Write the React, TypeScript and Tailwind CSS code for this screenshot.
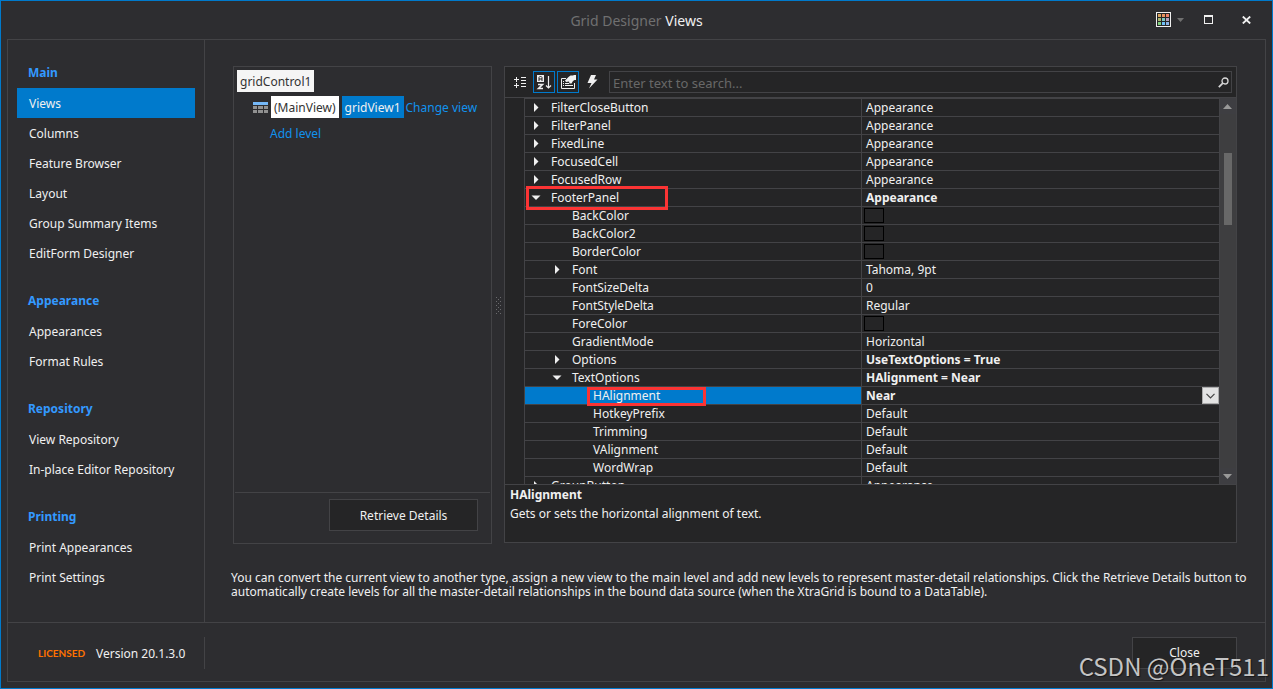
import { useState } from "react";

type Prop = {
    name: string;
    value?: string;
    level?: number;
    open?: boolean;
    bold?: boolean;
    swatch?: boolean;
}

const groups = [
    { title: "Main", items: ["Views", "Columns", "Feature Browser", "Layout", "Group Summary Items", "EditForm Designer"] },
    { title: "Appearance", items: ["Appearances", "Format Rules"] },
    { title: "Repository", items: ["View Repository", "In-place Editor Repository"] },
    { title: "Printing", items: ["Print Appearances", "Print Settings"] },
]

const props: Prop[] = [
    { name: "FilterCloseButton", value: "Appearance", open: false },
    { name: "FilterPanel", value: "Appearance", open: false },
    { name: "FixedLine", value: "Appearance", open: false },
    { name: "FocusedCell", value: "Appearance", open: false },
    { name: "FocusedRow", value: "Appearance", open: false },
    { name: "FooterPanel", value: "Appearance", open: true, bold: true },
    { name: "BackColor", level: 1, swatch: true },
    { name: "BackColor2", level: 1, swatch: true },
    { name: "BorderColor", level: 1, swatch: true },
    { name: "Font", value: "Tahoma, 9pt", level: 1, open: false },
    { name: "FontSizeDelta", value: "0", level: 1 },
    { name: "FontStyleDelta", value: "Regular", level: 1 },
    { name: "ForeColor", level: 1, swatch: true },
    { name: "GradientMode", value: "Horizontal", level: 1 },
    { name: "Options", value: "UseTextOptions = True", level: 1, open: false, bold: true },
    { name: "TextOptions", value: "HAlignment = Near", level: 1, open: true, bold: true },
    { name: "HAlignment", value: "Near", level: 2, bold: true },
    { name: "HotkeyPrefix", value: "Default", level: 2 },
    { name: "Trimming", value: "Default", level: 2 },
    { name: "VAlignment", value: "Default", level: 2 },
    { name: "WordWrap", value: "Default", level: 2 },
    { name: "GroupButton", value: "Appearance", open: false },
]

const indents = ["pl-[5px]", "pl-[26px]", "pl-[47px]"]

const swatches = ["#dba560", "#e8935f", "#ee8168", "#a9b871", "#7ec8c0", "#b3a0c0", "#7ed07e", "#6fc0f8", "#8ab4e8"]

const PaletteIcon = () => (
    <svg width="15" height="15" shapeRendering="crispEdges">
        <path d="M0 0h15v15H0z" fill="#f0f0f0" />
        <path d="M1 1h13v13H1z" fill="#262626" />
        {swatches.map((c, i) => (
            <rect key={i} x={2 + (i % 3) * 4} y={2 + Math.floor(i / 3) * 4} width="3" height="3" fill={c} />
        ))}
    </svg>
)

const CategoryIcon = () => (
    <svg width="13" height="13" fill="#f0f0f0" shapeRendering="crispEdges">
        <path d="M0 3h5v1H0zM2 1h1v5H2zM0 9h5v1H0zM2 7h1v5H2zM7 1h5v1H7zM7 4h5v1H7zM7 7h5v1H7zM7 10h5v1H7z" />
    </svg>
)

const SortIcon = () => (
    <svg width="16" height="16" fill="none">
        <path d="M1 1h7v7H1z" fill="#f0f0f0" />
        <path d="M3 7V3.500L4.500 2 6 3.500V7M3 5h3" stroke="#252525" />
        <path d="M2 10.500h4.500L2.500 14.500H7" stroke="#f0f0f0" strokeWidth="1.600" />
        <path d="M12.500 2v12M10 11.500l2.500 2.500 2.500-2.500" stroke="#f0f0f0" strokeWidth="1.200" />
    </svg>
)

const PagesIcon = () => (
    <svg width="16" height="16" fill="none">
        <path d="M6 4.500H1.500v10h13V9" stroke="#f0f0f0" />
        <path d="M3 7.500h1M3 9.500h1M3 11.500h1M5 9.500h4M5 11.500h8" stroke="#f0f0f0" />
        <path d="M5 6.500L8.500 3l2-1.500H13L14 1h2v5h-1.500L13 7l-1.500 2.500H9.500L9 7.500 6 8z" fill="#f0f0f0" />
    </svg>
)

const BoltIcon = () => (
    <svg width="11" height="14" fill="#f0f0f0">
        <path d="M4 0h5L7 4.500h3.500L2 13.500 4.500 8H0.500z" />
    </svg>
)

const SearchIcon = () => (
    <svg width="11" height="11" fill="none" stroke="#d8d8d8">
        <circle cx="7" cy="4" r="3" strokeWidth="1.300" />
        <path d="M4.800 6.200L0.800 10.200" strokeWidth="1.800" />
    </svg>
)

const TableIcon = () => (
    <svg width="15" height="11" fill="#919191" shapeRendering="crispEdges">
        <rect width="15" height="3" fill="#75b8f8" />
        <path d="M0 4h4v3H0zM5 4h5v3H5zM11 4h4v3h-4zM0 8h4v3H0zM5 8h5v3H5zM11 8h4v3h-4z" />
    </svg>
)

const GripIcon = () => (
    <svg width="5" height="17" fill="#6a6a6d" shapeRendering="crispEdges">
        {[0, 4, 8, 12, 16].map((y) => (
            <path key={y} d={`M0 ${y}h1v1H0zM4 ${y}h1v1H4zM2 ${y + 2}h1v1H2z`} />
        ))}
    </svg>
)

const Expander = ({ open, name }: { open: boolean; name: string }) => (
    <button aria-label={`Toggle ${name}`} className="flex w-3 h-[17px] items-center justify-center">
        {open ? (
            <svg width="10" height="5" fill="#f0f0f0"><path d="M0.500 0.500h9L5 5z" /></svg>
        ) : (
            <svg width="6" height="9" fill="#f0f0f0"><path d="M1 0v9l4.500-4.500z" /></svg>
        )}
    </button>
)

const TitleBar = () => (
    <header className="relative flex h-[38px] shrink-0 items-center justify-center text-[14px]">
        <h1 className="text-[#f0f0f0]"><span className="text-[#707070]">Grid Designer</span> Views</h1>
        <div className="absolute right-[21px] top-0 flex h-[37px] items-center">
            <button aria-label="Skin" className="flex items-center gap-[6px]">
                <PaletteIcon />
                <svg width="7" height="4" fill="#707070"><path d="M0 0h7L3.500 4z" /></svg>
            </button>
            <button aria-label="Maximize" className="ml-5">
                <svg width="9" height="9" shapeRendering="crispEdges"><path d="M0 0h9v9H0zM1 2v6h7V2z" fill="#f0f0f0" fillRule="evenodd" /></svg>
            </button>
            <button aria-label="Close window" className="ml-[29px]">
                <svg width="9" height="8" stroke="#f0f0f0" strokeWidth="1.800"><path d="M0.800 0.500l7.400 7M8.200 0.500l-7.400 7" /></svg>
            </button>
        </div>
    </header>
)

const Sidebar = () => {
    const [active, setActive] = useState("Views")
    return (
        <nav className="w-[197px] shrink-0 border-r border-[#434346] px-[9px]">
            {groups.map((g) => (
                <div key={g.title}>
                    <h2 className="h-12 pt-4 pl-[11px] leading-[34px] font-bold text-[#3399ff]">{g.title}</h2>
                    {g.items.map((item) => (
                        <a
                            key={item}
                            href="#"
                            onClick={() => setActive(item)}
                            className={item === active ? "block h-[30px] pl-3 leading-8 bg-[#007acc]" : "block h-[30px] pl-3 leading-8"}
                        >
                            {item}
                        </a>
                    ))}
                </div>
            ))}
        </nav>
    )
}

const LevelTree = () => (
    <section className="flex w-[259px] shrink-0 flex-col border border-[#434346]">
        <div className="flex flex-1 flex-col items-start gap-1 p-[3px] leading-6">
            <button className="h-[22px] bg-[#f5f5f5] px-[3px] text-[#333333]">gridControl1</button>
            <div className="flex h-[22px] items-center pl-4">
                <TableIcon />
                <button className="ml-[3px] h-[22px] bg-white px-[3px] text-[#333333]">(MainView)</button>
                <button className="ml-[3px] h-[22px] bg-[#007acc] px-[3px]">gridView1</button>
                <a href="#" className="ml-[2px] h-[22px] text-[#1192ee]">Change view</a>
            </div>
            <a href="#" className="h-[22px] pl-[33px] text-[#1192ee]">Add level</a>
        </div>
        <div className="mx-px flex h-[51px] justify-end border-t border-[#434346] pt-[6px] pr-3">
            <button className="h-8 w-[149px] border border-[#434346] bg-[#252526] pt-px">Retrieve Details</button>
        </div>
    </section>
)

const PropRow = ({ p }: { p: Prop }) => {
    const selected = p.name === "HAlignment"
    return (
        <tr className="h-[18px] leading-[17px]">
            <td className={selected ? "relative border-r border-b border-[#434346] bg-[#007acc] p-0" : "relative border-r border-b border-[#434346] p-0"}>
                <div className={`flex h-[17px] gap-[9px] ${indents[p.level ?? 0]}`}>
                    {p.open === undefined ? <span className="w-3" /> : <Expander open={p.open} name={p.name} />}
                    <span>{p.name}</span>
                </div>
                {p.name === "FooterPanel" && <div className="absolute z-10 -top-[3px] left-px h-6 w-[142px] border-3 border-[#fb3434]" />}
                {selected && <div className="absolute z-10 top-0 left-[62px] h-[19px] w-[119px] border-3 border-[#fb3434]" />}
            </td>
            <td className={p.bold ? "relative border-b border-[#434346] p-0 font-bold" : "relative border-b border-[#434346] p-0"}>
                {selected ? (
                    <>
                        <select aria-label={p.name} defaultValue="Near" className="block h-[17px] w-full appearance-none bg-transparent pl-1">
                            <option>Default</option>
                            <option>Near</option>
                            <option>Center</option>
                            <option>Far</option>
                        </select>
                        <span className="pointer-events-none absolute top-0 right-0 flex h-[17px] w-[17px] items-center justify-center border border-[#ababab] bg-[#e3e3e3]">
                            <svg width="9" height="6" fill="none" stroke="#444444" strokeWidth="1.200"><path d="M0.500 0.800l4 4 4-4" /></svg>
                        </span>
                    </>
                ) : p.swatch ? (
                    <div className="ml-[2px] h-[15px] w-5 border border-black" />
                ) : (
                    <div className="h-[17px] pl-1">{p.value}</div>
                )}
            </td>
        </tr>
    )
}

const ScrollBar = () => (
    <div className="flex w-[17px] shrink-0 flex-col items-center border-l border-[#434346] bg-[#3e3e40]">
        <button aria-label="Scroll up" className="flex h-4 w-full items-center justify-center bg-[#3e3e42] pr-px">
            <svg width="9" height="5" fill="#999999"><path d="M0 5h9L4.500 0z" /></svg>
        </button>
        <div className="flex w-full flex-1 justify-center">
            <div className="mt-[39px] h-[72px] w-2 bg-[#686868]" />
        </div>
        <button aria-label="Scroll down" className="flex h-4 w-full items-center justify-center bg-[#3e3e42] pr-px">
            <svg width="9" height="5" fill="#999999"><path d="M0 0h9L4.500 5z" /></svg>
        </button>
    </div>
)

const PropertyGrid = () => (
    <section className="mb-px flex min-w-0 flex-1 flex-col border border-[#434346] bg-[#252526]">
        <div className="flex h-[31px] shrink-0 items-center border-b border-[#434346] pr-1 pl-[9px]">
            <button aria-label="Categorized"><CategoryIcon /></button>
            <button aria-label="Alphabetical" className="ml-[6px] flex h-[22px] w-[22px] items-center justify-center border border-[#007acc]"><SortIcon /></button>
            <button aria-label="Properties" className="ml-[2px] flex h-[22px] w-[22px] items-center justify-center border border-[#007acc]"><PagesIcon /></button>
            <button aria-label="Events" className="ml-2"><BoltIcon /></button>
            <label className="ml-[11px] flex h-[22px] flex-1 items-center border border-[#434346] pr-[2px] pl-[3px]">
                <input type="text" aria-label="Search" placeholder="Enter text to search..." className="h-5 min-w-0 flex-1 bg-transparent pt-px text-[13px] outline-none placeholder:text-[#686868]" />
                <SearchIcon />
            </label>
        </div>
        <div className="flex min-h-0 flex-1">
            <div className="ml-[19px] min-w-0 flex-1 overflow-hidden border-t border-l border-[#434346]">
                <table className="w-full table-fixed border-separate border-spacing-0">
                    <colgroup>
                        <col className="w-[337px]" />
                        <col />
                    </colgroup>
                    <tbody>
                        {props.map((p) => <PropRow key={p.name} p={p} />)}
                    </tbody>
                </table>
            </div>
            <ScrollBar />
        </div>
        <div className="h-[58px] shrink-0 border-t border-[#434346] px-[5px] leading-[19px]">
            <div className="font-bold">HAlignment</div>
            <div>Gets or sets the horizontal alignment of text.</div>
        </div>
    </section>
)

const App = () => {
    return (
        <div className="relative flex h-screen flex-col border border-[#007acc] bg-[#2d2d30] font-['Noto_Sans',sans-serif] text-[12px] text-[#f0f0f0]">
            <TitleBar />
            <div className="mx-[6px] mb-[6px] flex min-h-0 flex-1 flex-col border border-[#434346]">
                <div className="flex min-h-0 flex-1">
                    <Sidebar />
                    <main className="flex min-w-0 flex-1 flex-col pt-[26px]">
                        <div className="flex min-h-0 flex-1 px-7">
                            <LevelTree />
                            <div className="flex w-3 shrink-0 items-center justify-center"><GripIcon /></div>
                            <PropertyGrid />
                        </div>
                        <p className="mt-[27px] mb-[23px] pl-[26px] leading-[14px] whitespace-nowrap">
                            You can convert the current view to another type, assign a new view to the main level and add new levels to represent master-detail relationships. Click the Retrieve Details button to
                            <br />
                            automatically create levels for all the master-detail relationships in the bound data source (when the XtraGrid is bound to a DataTable).
                        </p>
                    </main>
                </div>
                <footer className="flex h-[59px] shrink-0 items-center border-t border-[#434346] pt-px pr-7">
                    <div className="flex h-8 w-[197px] items-center border-r border-[#434346] pt-[2px] pl-[30px]">
                        <span className="w-[58px] font-['Lato',sans-serif] text-[10px] font-bold text-[#ff7200]">LICENSED</span>
                        <span>Version 20.1.3.0</span>
                    </div>
                    <button className="ml-auto h-8 w-[105px] border border-[#434346] bg-[#252526]">Close</button>
                </footer>
            </div>
            <div className="pointer-events-none absolute right-[3px] bottom-1 font-['Noto_Sans_CJK_SC',sans-serif] text-[24px] leading-[36px] text-[#c4c4c4] [text-shadow:1px_1px_1px_#00000080]">CSDN @OneT511</div>
        </div>
    )
}

export default App
